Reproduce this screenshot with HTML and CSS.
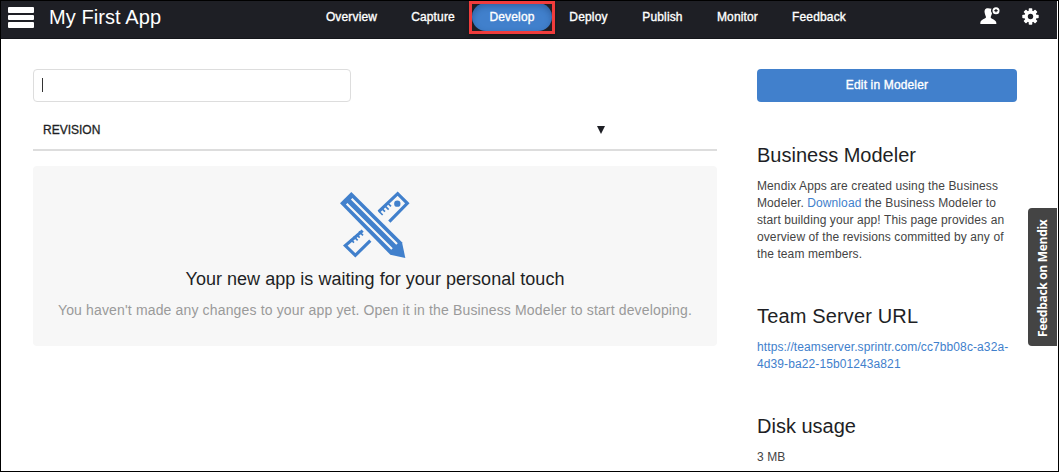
FILE: index.html
```html
<!DOCTYPE html>
<html lang="en">
<head>
<meta charset="utf-8">
<title>My First App</title>
<link rel="stylesheet" href="styles.css">
</head>
<body>
<div class="page">
  <header class="topbar">
    <div class="menu"><i></i><i></i><i></i></div>
    <div class="app-name"><span>My First App</span></div>
    <nav class="nav">
      <a><span>Overview</span></a><a><span>Capture</span></a><a class="active"><span>Develop</span></a><a><span>Deploy</span></a><a><span>Publish</span></a><a><span>Monitor</span></a><a><span>Feedback</span></a>
    </nav>
    <div class="tools">
      <svg class="user" width="20" height="18" viewBox="0 0 60 54">
        <path fill="#fff" d="M24 4C15 4 13 10 14 17C15 24 18 27 18 31C18 36 1 37 1 48V51H49V48C49 38 33 37 32 31C33 26 36 22 36 18C32 14 32 7 35 5Z"/>
        <circle cx="48" cy="11" r="10.5" fill="#fff"/>
        <path d="M48 6V16M43 11H53" stroke="#1e1f25" stroke-width="3.5"/>
      </svg>
      <svg class="gear" width="17" height="17" viewBox="0 0 17 17">
        <g fill="#fff"><g id="t"><rect x="6.7" y="0.3" width="3.6" height="16.4" rx=".8"/><rect x="0.3" y="6.7" width="16.4" height="3.6" rx=".8"/></g>
        <use href="#t" transform="rotate(45 8.5 8.5)"/><circle cx="8.5" cy="8.5" r="6.1"/></g>
        <circle cx="8.5" cy="8.5" r="2.7" fill="#1e1f25"/>
      </svg>
    </div>
  </header>
  <main class="content">
    <section class="revisions">
      <div class="search"><i class="caret"></i></div>
      <div class="table-head"><span>REVISION</span>
        <svg width="8" height="8" viewBox="0 0 8 8"><path d="M0 0H8L4 8Z" fill="#1e1f25"/></svg>
      </div>
      <div class="empty">
        <svg class="tools-icon" width="73" height="70" viewBox="57 30 219 210">
          <g fill="none" stroke="#4180cc" stroke-width="9.5">
            <path d="M176 95L233 41L262 70L208 125"/>
            <path d="M128 152L76 197L106 226L151 182"/>
          </g>
          <g fill="none" stroke="#4180cc" stroke-width="5">
            <path d="M176 93L188 105M185 85L195 95M194 77L206 89M203 69L213 79"/>
            <path d="M117 154L129 166M109 163L119 173M101 169L113 181M92 178L102 188"/>
          </g>
          <circle cx="232" cy="71" r="9.5" fill="#4180cc"/>
          <path fill="#4180cc" d="M60 70L94 36L246 187L256 234L211 224Z"/>
          <path d="M80 71L216 207M95 56L231 192" stroke="#f7f7f7" stroke-width="6.5" fill="none"/>
        </svg>
        <h2><span>Your new app is waiting for your personal touch</span></h2>
        <p><span>You haven't made any changes to your app yet. Open it in the Business Modeler to start developing.</span></p>
      </div>
    </section>
    <aside class="side">
      <div class="button"><span>Edit in Modeler</span></div>
      <h3>Business Modeler</h3>
      <p class="about">Mendix Apps are created using the Business<br>Modeler. <a>Download</a> the Business Modeler to<br>start building your app! This page provides an<br>overview of the revisions committed by any of<br>the team members.</p>
      <h3 class="server">Team Server URL</h3>
      <p class="url"><a>https://teamserver.sprintr.com/cc7bb08c-a32a-<br>4d39-ba22-15b01243a821</a></p>
      <h3>Disk usage</h3>
      <p>3 MB</p>
    </aside>
  </main>
  <div class="highlight"></div>
  <div class="feedback"><span>Feedback on Mendix</span></div>
</div>
</body>
</html>
```
FILE: styles.css
```css
* { box-sizing: border-box; }
body { margin: 0; font-family: "Liberation Sans", Arial, sans-serif; color: #1e1f25; background: #fff; }
h2, h3, p { margin: 0; font-weight: 400; }
.page { position: relative; width: 1059px; height: 472px; border: 1px solid #000; overflow: hidden; }
.topbar { display: flex; width: 1056px; height: 38px; background: #1e1f25; color: #fff; border-bottom: 1px solid #15161b; }
.menu { width: 48px; padding: 6px 0 0 7px; display: flex; flex-direction: column; gap: 2px; }
.menu i { width: 26px; height: 5.5px; background: #fff; border-radius: 1px; }
.app-name { width: 260px; font-size: 20px; line-height: 32px; letter-spacing: 0.08px; }
.nav { display: grid; grid-template-columns: 85px 78px 80px 73px 75px 75px 89px; height: 28px; margin-top: 2px; width: 555px; font-size: 12px; line-height: 28px; letter-spacing: 0.15px; text-align: center; -webkit-text-stroke: 0.35px #fff; }
.nav a:last-child { padding-right: 1px; }
.nav .active { background: #4180cc; border-radius: 14px; box-shadow: inset 0 3px 6px rgba(20, 50, 100, .4); }
.tools { display: flex; margin-left: 116px; padding-top: 6px; gap: 22px; }
.gear { margin-top: 1px; }
.content { display: flex; gap: 40px; padding: 30px 0 0 32px; }
.revisions { width: 684px; }
.search { width: 318px; height: 33px; border: 1px solid #ddd; border-radius: 4px; padding: 8px 0 0 8px; }
.caret { display: block; width: 1px; height: 14px; background: #333; }
.table-head { display: flex; align-items: center; justify-content: space-between; height: 49px; padding: 8px 112px 0 10px; border-bottom: 2px solid #ddd; font-size: 12px; -webkit-text-stroke: 0.3px #1e1f25; }
.empty { height: 180px; margin-top: 15px; padding-top: 24px; border-radius: 4px; background: #f7f7f7; text-align: center; }
.tools-icon { display: block; margin: 0 0 0 306px; }
.empty h2 { margin-top: 7px; font-size: 18px; line-height: 24px; letter-spacing: 0.03px; }
.empty p { margin-top: 9px; font-size: 14px; line-height: 20px; letter-spacing: 0.15px; color: #9a9a9a; }
.side { width: 260px; font-size: 12px; line-height: 17px; }
.button { height: 33px; margin-bottom: 38px; border-radius: 4px; background: #4180cc; color: #fff; line-height: 32px; letter-spacing: 0.15px; text-align: center; -webkit-text-stroke: 0.35px #fff; }
.side h3 { font-size: 20px; line-height: 30px; margin-bottom: 8px; }
.side .server { letter-spacing: 0.15px; }
.side p { color: #444; white-space: nowrap; letter-spacing: 0.1px; }
.side a { color: #4180cc; }
.side .about { margin-bottom: 38px; }
.side .url { margin-bottom: 38px; }
.highlight { position: absolute; left: 468px; top: 0; width: 86px; height: 33px; border: 3px solid #f03c3c; box-shadow: 0 2px 4px rgba(0, 0, 0, .3); }
.feedback { position: absolute; left: 1027px; top: 207px; width: 29px; height: 138px; border-radius: 0 4px 4px 0; background: #444; color: #fff; font: bold 12px/29px "Open Sans", sans-serif; letter-spacing: -0.3px; writing-mode: vertical-rl; transform: rotate(180deg); padding-top: 9px; }
```
